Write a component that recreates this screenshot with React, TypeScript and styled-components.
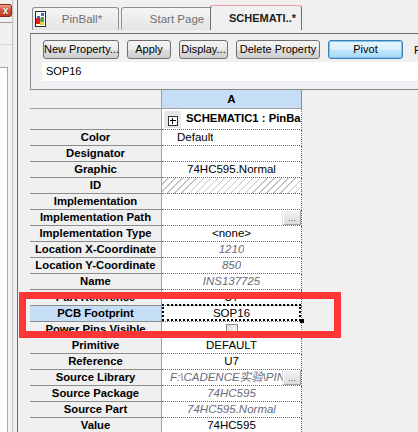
import React from "react";
import styled, { createGlobalStyle, css } from "styled-components";

const Global = createGlobalStyle`
  html, body { margin: 0; padding: 0; background: #f0f0f0; }
  body {
    font-family: "Liberation Sans", Arial, "Noto Sans CJK SC", sans-serif;
    font-size: 11px;
    color: #000;
    overflow: hidden;
  }
  * { box-sizing: border-box; }
`;

const Screen = styled.div`
  position: relative;
  width: 418px;
  height: 432px;
  display: flex;
  overflow: hidden;
  background: #f0f0f0;
`;

/* ---------- docked side pane on the left ---------- */

const SidePane = styled.div`
  width: 18px;
  flex: none;
  display: flex;
  border-right: 1px solid #6b6b6b;
`;

const SideColumn = styled.div`
  width: 13px;
  display: flex;
  flex-direction: column;
  border-right: 1px solid #c9c9c9;
`;

const SideHeader = styled.div`
  height: 23px;
  flex: none;
  border-bottom: 1px solid #9a9a9a;
  padding-top: 4px;
`;

const CloseButton = styled.div`
  width: 12px;
  height: 13px;
  border: 1px solid #8a2b1c;
  border-left: none;
  border-radius: 0 3px 3px 0;
  background: linear-gradient(#eea28f, #d9583f 45%, #c23a22);
  color: #fff;
  font-weight: bold;
  font-size: 10px;
  line-height: 11px;
  text-align: center;
  text-shadow: 0 0 1px #5a1208;
`;

const SideBand = styled.div`
  height: 22px;
  flex: none;
  border-bottom: 1px solid #d4d4d4;
`;

const SideGap = styled.div`
  height: 22px;
  flex: none;
`;

const SideList = styled.div`
  flex: 1;
  width: 8px;
  background: #fff;
  border-right: 1px solid #a8a8a8;
  border-top: 1px solid #a8a8a8;
`;

const SideGutter = styled.div`
  flex: 1;
  border-left: 1px solid #e4e4e4;
`;

/* ---------- document area ---------- */

const Main = styled.div`
  flex: 1;
  min-width: 0;
  display: flex;
  flex-direction: column;
`;

const TabStrip = styled.div`
  height: 33px;
  flex: none;
  display: flex;
  align-items: flex-end;
  padding: 0 0 3px 14px;
`;

const Tab = styled.div<{ $w: number; $active?: boolean; $gap?: number }>`
  width: ${(p) => p.$w}px;
  margin-left: ${(p) => p.$gap ?? 0}px;
  height: 23px;
  display: flex;
  align-items: center;
  border: 1px solid #8d9097;
  border-bottom: none;
  border-radius: 3px 3px 0 0;
  background: linear-gradient(#f5f5f5, #e4e4e4);
  color: #707070;
  font-size: 11.5px;
  white-space: nowrap;
  overflow: hidden;
  ${(p) =>
    p.$active &&
    css`
      position: relative;
      z-index: 1;
      height: 25px;
      padding-left: 18px;
      color: #1d1d1d;
      font-weight: bold;
      font-size: 11px;
      background: #f0f0f0;
      border-color: #6f6f6f;
      border-top: 1px solid #f0a0a0;
    `}
`;

const TabIcon = styled.svg`
  margin-left: 2px;
  flex: none;
`;

const TabLabel = styled.span<{ $center?: boolean }>`
  flex: ${(p) => (p.$center ? 1 : "none")};
  text-align: center;
  padding-bottom: 1px;
`;

const Panel = styled.div`
  margin-left: 12px;
  height: 57px;
  flex: none;
  border-top: 1px solid #6e6e6e;
  border-left: 1px solid #8a8a8a;
  border-bottom: 1px solid #8a8a8a;
  padding: 6px 0 0 12px;
  display: flex;
  flex-direction: column;
`;

const ButtonRow = styled.div`
  display: flex;
  align-items: center;
  gap: 8px;
  height: 19px;
  white-space: nowrap;
`;

const Button = styled.div<{ $w: number; $default?: boolean }>`
  width: ${(p) => p.$w}px;
  height: 19px;
  flex: none;
  border: 1px solid #707070;
  border-radius: 3px;
  background: linear-gradient(#f3f3f3, #ebebeb 50%, #dddddd 51%, #cfcfcf);
  font-size: 11px;
  line-height: 17px;
  text-align: center;
  color: #000;
  ${(p) =>
    p.$default &&
    css`
      border-color: #3c7fb1;
      box-shadow: inset 0 0 0 1px #7cc6f0;
      background: linear-gradient(#e8f5fd, #d9effc 50%, #bee6fd 51%, #a7d9f5);
    `}
`;

const FilterLabel = styled.span`
  margin-left: 3px;
  font-size: 11px;
`;

const SearchBox = styled.div`
  margin: 3px 0 0 -1px;
  height: 21px;
  background: #fff;
  border-bottom: 2px solid #e8eef5;
  padding: 3px 0 0 4px;
  font-size: 11px;
`;

/* ---------- property grid ---------- */

const Grid = styled.div`
  margin-left: 12px;
  display: grid;
  grid-template-columns: 132px 140px;
  align-content: start;
`;

const Corner = styled.div`
  height: 19px;
  border-bottom: 1px solid #a0a0a0;
  border-right: 1px solid #a0a0a0;
`;

const ColumnHead = styled.div`
  height: 19px;
  background: #c6ddf6;
  border-bottom: 1px solid #a0a0a0;
  border-right: 1px solid #8a8a8a;
  font-weight: bold;
  font-size: 11.5px;
  line-height: 18px;
  text-align: center;
`;

const Label = styled.div<{ $tall?: boolean; $selected?: boolean }>`
  height: ${(p) => (p.$tall ? 21 : 16)}px;
  border-bottom: 1px solid #8c8c8c;
  border-right: 1px solid #a0a0a0;
  background: ${(p) => (p.$selected ? "#c6ddf6" : "transparent")};
  font-weight: bold;
  font-size: 11.3px;
  line-height: 15px;
  text-align: center;
  white-space: nowrap;
  overflow: hidden;
`;

const Value = styled.div<{
  $tall?: boolean;
  $italic?: boolean;
  $align?: "left" | "center";
  $indent?: number;
  $hatched?: boolean;
  $selected?: boolean;
}>`
  position: relative;
  height: ${(p) => (p.$tall ? 21 : 16)}px;
  display: flex;
  align-items: flex-start;
  border-bottom: 1px dotted #6a6a6a;
  border-right: 1px dotted #6a6a6a;
  background: #fff;
  font-size: 11.5px;
  line-height: 15px;
  white-space: nowrap;
  overflow: ${(p) => (p.$selected ? "visible" : "hidden")};
  color: ${(p) => (p.$italic ? "#6a6a78" : "#000")};
  font-style: ${(p) => (p.$italic ? "italic" : "normal")};
  justify-content: ${(p) => (p.$align === "left" ? "flex-start" : "center")};
  padding-left: ${(p) => p.$indent ?? 0}px;
  ${(p) =>
    p.$hatched &&
    css`
      background: repeating-linear-gradient(
        135deg,
        #fff 0 4px,
        #c4c4c4 4px 5px
      );
    `}
  ${(p) =>
    p.$selected &&
    css`
      z-index: 1;
      &::after {
        content: "";
        position: absolute;
        inset: -2px 0 0 0;
        border: 2px dotted #000;
        pointer-events: none;
      }
      &::before {
        content: "";
        position: absolute;
        right: -3px;
        bottom: -2px;
        width: 4px;
        height: 4px;
        background: #000;
      }
    `}
`;

const ValueText = styled.span<{ $fill?: boolean }>`
  flex: ${(p) => (p.$fill ? 1 : "none")};
  min-width: 0;
  overflow: hidden;
`;

const GroupCell = styled.div`
  display: flex;
  align-items: flex-start;
  gap: 5px;
  padding-left: 2px;
  white-space: nowrap;
`;

const ExpandTile = styled.div`
  width: 17px;
  height: 17px;
  margin-top: 2px;
  background: #e6e6e6;
  display: flex;
  align-items: center;
  justify-content: center;
  padding-top: 3px;
`;

const ExpandBox = styled.div`
  width: 10px;
  height: 10px;
  border: 1px solid #333;
  background: #fff;
  position: relative;
  &::before,
  &::after {
    content: "";
    position: absolute;
    background: #000;
  }
  &::before { left: 1px; right: 1px; top: 3px; height: 1px; }
  &::after { top: 1px; bottom: 1px; left: 3px; width: 1px; }
`;

const GroupTitle = styled.span`
  font-weight: bold;
  font-size: 11.3px;
  line-height: 14px;
  margin-top: 2px;
`;

const BrowseButton = styled.div`
  width: 18px;
  height: 15px;
  flex: none;
  margin-left: auto;
  border: 1px solid #a6a6a6;
  border-top-color: #fdfdfd;
  border-left-color: #fdfdfd;
  background: linear-gradient(#f2f2f2, #dcdcdc);
  box-shadow: 0 0 0 0.5px #c8c8c8;
  color: #555;
  font-style: normal;
  font-size: 9px;
  line-height: 15px;
  text-align: center;
`;

const CheckBox = styled.div`
  width: 12px;
  height: 12px;
  margin-top: 2px;
  border: 1px solid #8e8f8f;
  background: linear-gradient(135deg, #dcdcdc, #fbfbfb);
`;

/* red annotation frame around the footprint row */
const Highlight = styled.div`
  position: absolute;
  left: 19px;
  top: 292px;
  width: 322px;
  height: 46px;
  border: 7px solid #ff3636;
  pointer-events: none;
  z-index: 5;
`;

type Row = {
  label: string;
  value?: string;
  italic?: boolean;
  align?: "left" | "center";
  indent?: number;
  hatched?: boolean;
  browse?: boolean;
  check?: boolean;
  selected?: boolean;
};

const rows: Row[] = [
  { label: "Color", value: "Default", align: "left", indent: 15 },
  { label: "Designator" },
  { label: "Graphic", value: "74HC595.Normal" },
  { label: "ID", hatched: true },
  { label: "Implementation" },
  { label: "Implementation Path", browse: true },
  { label: "Implementation Type", value: "<none>" },
  { label: "Location X-Coordinate", value: "1210", italic: true },
  { label: "Location Y-Coordinate", value: "850", italic: true },
  { label: "Name", value: "INS137725", italic: true },
  { label: "Part Reference", value: "U7" },
  { label: "PCB Footprint", value: "SOP16", selected: true },
  { label: "Power Pins Visible", check: true },
  { label: "Primitive", value: "DEFAULT" },
  { label: "Reference", value: "U7" },
  {
    label: "Source Library",
    value: "F:\\CADENCE实验\\PIN",
    italic: true,
    browse: true,
    align: "left",
    indent: 8,
  },
  { label: "Source Package", value: "74HC595", italic: true },
  { label: "Source Part", value: "74HC595.Normal", italic: true },
  { label: "Value", value: "74HC595" },
];

function SchematicIcon() {
  return (
    <TabIcon width="11" height="16" viewBox="0 0 11 16">
      <rect x="0.5" y="0.5" width="10" height="15" fill="#fff" stroke="#2b2b2b" />
      <rect x="6" y="2" width="3" height="3" fill="#3a6fd8" />
      <rect x="2" y="5" width="3" height="2" fill="#3a6fd8" />
      <rect x="1" y="7" width="4" height="6" fill="#e02020" />
      <rect x="6" y="6" width="3" height="5" fill="#36b336" />
      <rect x="5" y="11" width="4" height="3" fill="#f2d21b" />
      <path d="M5 8h1M5 10h1" stroke="#2b2b2b" />
    </TabIcon>
  );
}

export default function App() {
  return (
    <>
      <Global />
      <Screen>
        <SidePane>
          <SideColumn>
            <SideHeader>
              <CloseButton>x</CloseButton>
            </SideHeader>
            <SideBand />
            <SideGap />
            <SideList />
          </SideColumn>
          <SideGutter />
        </SidePane>

        <Main>
          <TabStrip>
            <Tab $w={87}>
              <SchematicIcon />
              <TabLabel $center>PinBall*</TabLabel>
            </Tab>
            <Tab $w={112} $gap={2}>
              <TabLabel $center>Start Page</TabLabel>
            </Tab>
            <Tab $w={92} $gap={-23} $active>
              <TabLabel>SCHEMATI..*</TabLabel>
            </Tab>
          </TabStrip>

          <Panel>
            <ButtonRow>
              <Button $w={76}>New Property...</Button>
              <Button $w={44}>Apply</Button>
              <Button $w={49}>Display...</Button>
              <Button $w={84}>Delete Property</Button>
              <Button $w={75} $default>
                Pivot
              </Button>
              <FilterLabel>Filter by:</FilterLabel>
            </ButtonRow>
            <SearchBox>SOP16</SearchBox>
          </Panel>

          <Grid>
            <Corner />
            <ColumnHead>A</ColumnHead>

            <Label $tall />
            <Value $tall $align="left">
              <GroupCell>
                <ExpandTile>
                  <ExpandBox />
                </ExpandTile>
                <GroupTitle>SCHEMATIC1 : PinBall</GroupTitle>
              </GroupCell>
            </Value>

            {rows.map((r) => (
              <React.Fragment key={r.label}>
                <Label $selected={r.selected}>{r.label}</Label>
                <Value
                  $italic={r.italic}
                  $align={r.browse && !r.value ? "left" : r.align}
                  $indent={r.indent}
                  $hatched={r.hatched}
                  $selected={r.selected}
                >
                  {r.check ? (
                    <CheckBox />
                  ) : (
                    r.value && <ValueText $fill={r.browse}>{r.value}</ValueText>
                  )}
                  {r.browse && <BrowseButton>...</BrowseButton>}
                </Value>
              </React.Fragment>
            ))}
          </Grid>
        </Main>

        <Highlight />
      </Screen>
    </>
  );
}
